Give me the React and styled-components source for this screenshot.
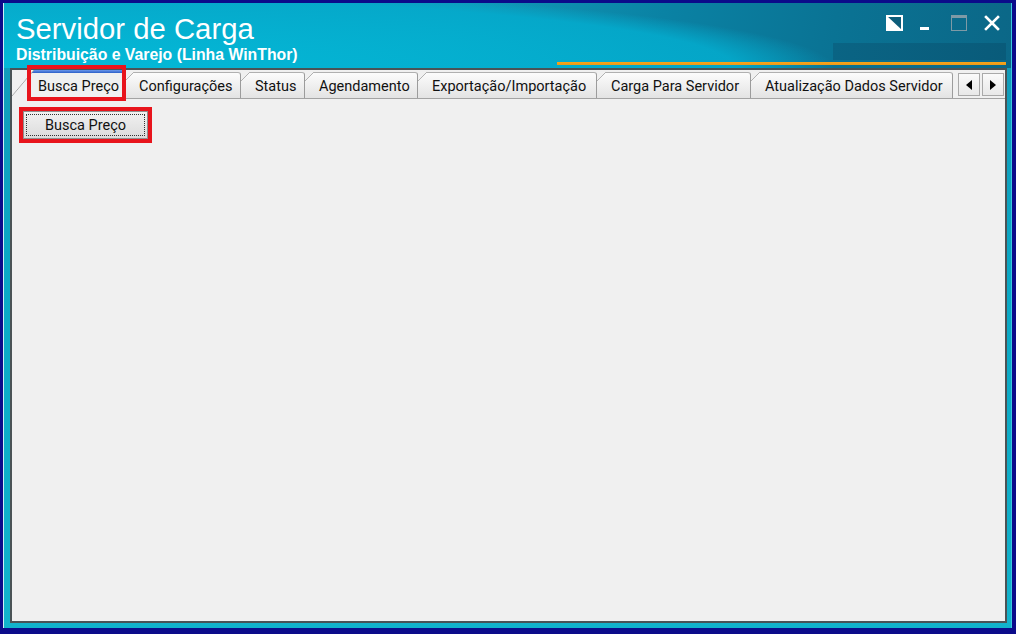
import React from 'react'
import styled, { createGlobalStyle } from 'styled-components'

const tabs = [
    { label: 'Configurações', width: 116 },
    { label: 'Status', width: 64 },
    { label: 'Agendamento', width: 113 },
    { label: 'Exportação/Importação', width: 179 },
    { label: 'Carga Para Servidor', width: 154 },
    { label: 'Atualização Dados Servidor', width: 202 },
]

export default function App() {
    return (
        <Frame>
            <GlobalStyle />
            <Window>
                <Header>
                    <TitleBlock>
                        <Title>Servidor de Carga</Title>
                        <Subtitle>Distribuição e Varejo (Linha WinThor)</Subtitle>
                    </TitleBlock>
                    <HeaderArt>
                        <Controls>
                            <Ctl $gap={0}>
                                <svg width="17" height="16" viewBox="0 0 17 16">
                                    <rect x="1" y="1" width="15" height="14" fill="#0d5d7a" stroke="#fff" strokeWidth="2" />
                                    <polygon points="1,1 1,15 16,15" fill="#fff" />
                                </svg>
                            </Ctl>
                            <Ctl $gap={17} $bottom>
                                <svg width="9" height="3" viewBox="0 0 9 3">
                                    <rect width="9" height="3" fill="#fff" />
                                </svg>
                            </Ctl>
                            <Ctl $gap={22}>
                                <svg width="16" height="16" viewBox="0 0 16 16">
                                    <rect x="0.5" y="0.5" width="15" height="15" fill="none" stroke="#7e9aa6" />
                                    <rect x="0" y="0" width="16" height="3" fill="#7e9aa6" />
                                </svg>
                            </Ctl>
                            <Ctl $gap={17}>
                                <svg width="16" height="16" viewBox="0 0 16 16">
                                    <path d="M2 2 L14 14 M14 2 L2 14" stroke="#fff" strokeWidth="2.6" strokeLinecap="square" />
                                </svg>
                            </Ctl>
                        </Controls>
                        <DarkBlock />
                        <OrangeRule />
                    </HeaderArt>
                </Header>
                <Panel>
                    <TabStrip>
                        <ActiveTab>Busca Preço</ActiveTab>
                        {tabs.map((t) => (
                            <Tab key={t.label} $w={t.width}>
                                {t.label}
                            </Tab>
                        ))}
                        <Scroller>
                            <ScrollBtn>
                                <svg width="6" height="10" viewBox="0 0 6 10">
                                    <polygon points="6,0 6,10 0,5" fill="#000" />
                                </svg>
                            </ScrollBtn>
                            <ScrollBtn>
                                <svg width="6" height="10" viewBox="0 0 6 10">
                                    <polygon points="0,0 0,10 6,5" fill="#000" />
                                </svg>
                            </ScrollBtn>
                        </Scroller>
                    </TabStrip>
                    <Content>
                        <ActionButton>Busca Preço</ActionButton>
                    </Content>
                </Panel>
            </Window>
        </Frame>
    )
}

const GlobalStyle = createGlobalStyle`
    html, body {
        margin: 0;
        padding: 0;
    }
    body {
        background: #0b0b8a;
        font-family: Roboto, "Liberation Sans", sans-serif;
    }
`

const Frame = styled.div`
    box-sizing: border-box;
    width: 1016px;
    height: 634px;
    display: flex;
    padding: 3px 4px 6px 3px;
    background: #0b0b8a;
`

const Window = styled.div`
    flex: 1;
    display: flex;
    flex-direction: column;
    border-left: 1px solid #cdeef5;
    border-right: 1px solid #3cc6de;
    background: linear-gradient(#1499b7 0%, #0aa9c6 45%, #12b3cc 100%);
`

const Header = styled.div`
    flex: none;
    height: 65px;
    display: flex;
    justify-content: space-between;
    padding: 0 5px 0 12px;
    background:
        radial-gradient(ellipse 830px 82px at 0 65px, rgba(2, 188, 218, 0.95) 0%, rgba(4, 170, 204, 0.9) 88%, rgba(4, 170, 204, 0) 100%),
        linear-gradient(100deg, #1b9dba 0%, #1199b8 45%, #0a82a4 65%, #0a7394 82%, #0b6787 100%);
`

const TitleBlock = styled.div`
    padding-top: 9px;
    color: #fff;
`

const Title = styled.div`
    font-family: "Liberation Sans", Arial, sans-serif;
    font-size: 29.3px;
    line-height: 33px;
`

const Subtitle = styled.div`
    margin-top: 0.5px;
    font-family: "Liberation Sans", Arial, sans-serif;
    font-weight: bold;
    font-size: 15.8px;
    line-height: 18px;
`

const HeaderArt = styled.div`
    width: 449px;
    display: flex;
    flex-direction: column;
    padding-top: 12px;
`

const Controls = styled.div`
    display: flex;
    justify-content: flex-end;
    height: 16px;
    padding-right: 6px;
`

const Ctl = styled.div`
    display: flex;
    align-items: ${(p) => (p.$bottom ? 'flex-end' : 'flex-start')};
    margin-left: ${(p) => p.$gap}px;
    padding-bottom: ${(p) => (p.$bottom ? 1 : 0)}px;
`

const DarkBlock = styled.div`
    align-self: flex-end;
    width: 173px;
    height: 17px;
    margin-top: 12px;
    background: linear-gradient(90deg, #0a6484, #095b7a);
`

const OrangeRule = styled.div`
    flex: none;
    height: 3px;
    margin-top: 2px;
    background: linear-gradient(#f7a51c, #ee9a18);
`

const Panel = styled.div`
    flex: 1;
    display: flex;
    flex-direction: column;
    margin: 0 4px 5px 6px;
    border: 2px solid #4a5356;
    background: #f0f0f0;
`

const TabStrip = styled.div`
    box-sizing: border-box;
    height: 29px;
    display: flex;
    align-items: flex-end;
    border-bottom: 1px solid #a3a3a3;
    background: #f0f0f0;
`

const TabBase = styled.div`
    position: relative;
    flex: none;
    box-sizing: border-box;
    font-size: 14.5px;
    color: #111;
    white-space: nowrap;
    border-right: 1px solid #9c9c9c;
    border-top-right-radius: 3px;
`

const Tab = styled(TabBase)`
    width: ${(p) => p.$w}px;
    height: 26px;
    padding: 2px 0 0 14px;
    line-height: 23px;
    border-top: 1px solid #b0b0b0;
    background: linear-gradient(#fcfcfc, #e3e3e3);

    &::before {
        content: '';
        position: absolute;
        left: 0;
        top: -1px;
        width: 9px;
        height: 9px;
        background: linear-gradient(
            to bottom right,
            #f0f0f0 calc(50% - 0.7px),
            #b2b2b2 50%,
            transparent calc(50% + 0.7px)
        );
    }
`

const ActiveTab = styled(TabBase)`
    z-index: 1;
    width: 113px;
    height: 29px;
    margin-bottom: -1px;
    padding: 6px 0 0 26px;
    line-height: 22px;
    background:
        linear-gradient(#6b98ec, #2c5fc6) no-repeat 0 0 / calc(100% - 2px) 3px,
        #f0f0f0;

    &::before {
        content: '';
        position: absolute;
        left: 0;
        top: 0;
        width: 22px;
        height: 26px;
        background: linear-gradient(
            to bottom right,
            #f0f0f0 calc(50% - 0.7px),
            #a8a8a8 50%,
            transparent calc(50% + 0.7px)
        );
    }

    /* red callout drawn over the selected tab */
    &::after {
        content: '';
        position: absolute;
        top: -5px;
        left: 15px;
        right: -2px;
        bottom: -2px;
        border: 4px solid #e8141c;
        pointer-events: none;
    }
`

const Scroller = styled.div`
    display: flex;
    gap: 2px;
    margin: 0 1px 2px auto;
`

const ScrollBtn = styled.div`
    box-sizing: border-box;
    width: 22px;
    height: 23px;
    display: flex;
    align-items: center;
    justify-content: center;
    border: 1px solid #a9a9a9;
    background: linear-gradient(#fafafa, #e8e8e8);
`

const Content = styled.div`
    flex: 1;
    padding: 12px 0 0 11px;
`

const ActionButton = styled.button`
    position: relative;
    width: 125px;
    height: 28px;
    padding: 0;
    font-family: Roboto, "Liberation Sans", sans-serif;
    font-size: 14.5px;
    color: #111;
    border: 1px solid #8f8f8f;
    border-radius: 0;
    background: linear-gradient(#f1f1f1, #dcdcdc);
    outline: 1px dotted #333;
    outline-offset: -4px;

    &::after {
        content: '';
        position: absolute;
        inset: -5px;
        border: 4px solid #e8141c;
        pointer-events: none;
    }
`
